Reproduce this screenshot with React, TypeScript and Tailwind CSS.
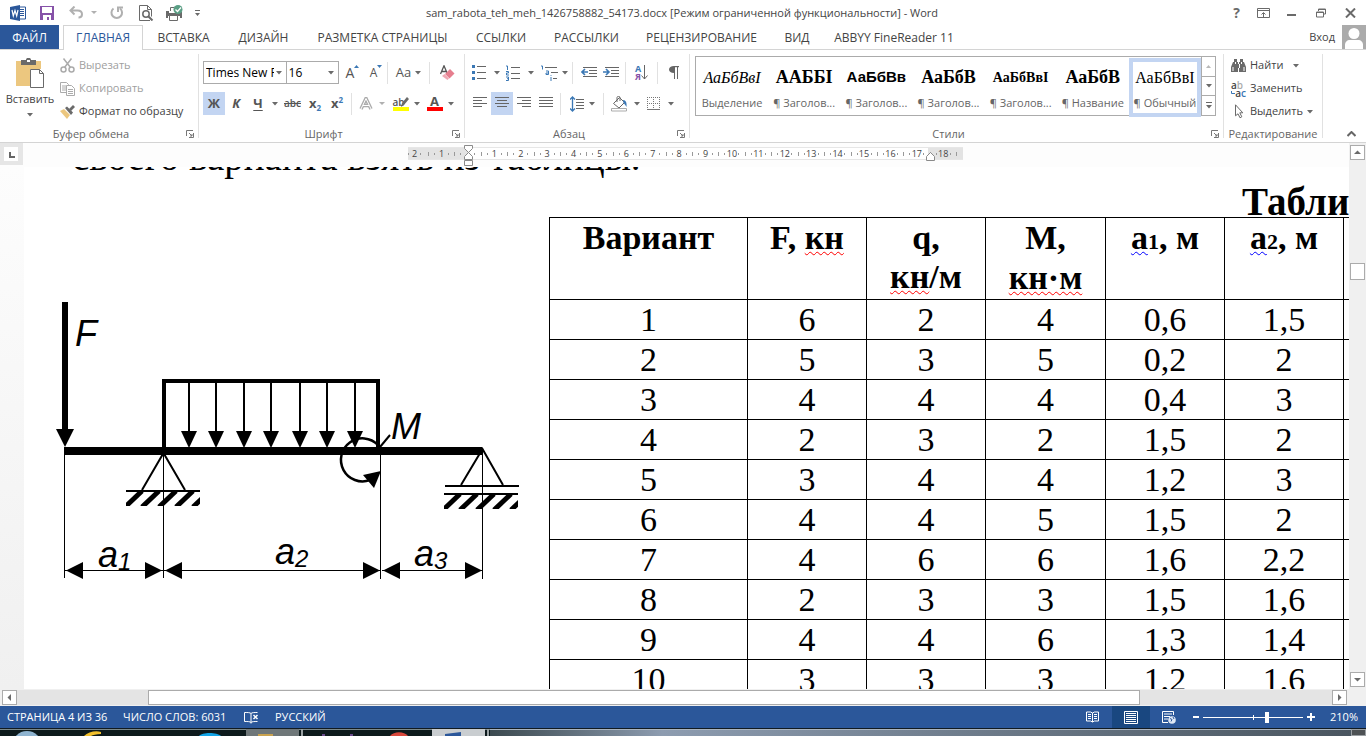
import type { ReactNode } from "react";

const tabs = [
  { name: "ВСТАВКА", width: "w-[81px]" },
  { name: "ДИЗАЙН", width: "w-[79px]" },
  { name: "РАЗМЕТКА СТРАНИЦЫ", width: "w-[159px]" },
  { name: "ССЫЛКИ", width: "w-[78px]" },
  { name: "РАССЫЛКИ", width: "w-[93px]" },
  { name: "РЕЦЕНЗИРОВАНИЕ", width: "w-[137px]" },
  { name: "ВИД", width: "w-[54px]" },
  { name: "ABBYY FineReader 11", width: "w-[140px]" },
];

const serif = "font-['Liberation_Serif','Times_New_Roman',serif]";
const sans = "font-['Liberation_Sans',Arial,sans-serif]";

const styles = [
  { name: "Выделение", sample: "АаБбВвІ", look: `${serif} italic text-[16px]` },
  { name: "¶ Заголов...", sample: "ААББІ", look: `${serif} font-bold text-[18px]` },
  { name: "¶ Заголов...", sample: "АаБбВв", look: `${sans} font-bold text-[15px]` },
  { name: "¶ Заголов...", sample: "АаБбВ", look: `${serif} font-bold text-[18px]` },
  { name: "¶ Заголов...", sample: "АаБбВвІ", look: `${serif} font-bold text-[14px]` },
  { name: "¶ Название", sample: "АаБбВ", look: `${serif} font-bold text-[18px]` },
  { name: "¶ Обычный", sample: "АаБбВвІ", look: `${serif} text-[16px]` },
];

const rows = [
  ["1", "6", "2", "4", "0,6", "1,5"],
  ["2", "5", "3", "5", "0,2", "2"],
  ["3", "4", "4", "4", "0,4", "3"],
  ["4", "2", "3", "2", "1,5", "2"],
  ["5", "3", "4", "4", "1,2", "3"],
  ["6", "4", "4", "5", "1,5", "2"],
  ["7", "4", "6", "6", "1,6", "2,2"],
  ["8", "2", "3", "3", "1,5", "1,6"],
  ["9", "4", "4", "6", "1,3", "1,4"],
  ["10", "3", "3", "3", "1,2", "1,6"],
];

const rulerMarks = ["1", "", "1", "2", "3", "4", "5", "6", "7", "8", "9", "10", "11", "12", "13", "14", "15", "16", "17", "18"];

const loadArrows = [189, 216, 244, 271, 300, 327, 355];

function Caret({ className = "" }: { className?: string }) {
  return (
    <svg className={`shrink-0 ${className}`} width="6" height="4" viewBox="0 0 6 4" aria-hidden>
      <path d="M0 0h6L3 3.5z" fill="#6a6a6a" />
    </svg>
  );
}

function Sep() {
  return <span className="h-[22px] w-px shrink-0 bg-[#e1e1e1]" />;
}

function Tool({ label, className = "w-[22px]", children }: { label: string; className?: string; children: ReactNode }) {
  return (
    <button type="button" aria-label={label} className={`flex h-[23px] shrink-0 items-center justify-center ${className}`}>
      {children}
    </button>
  );
}

function Launcher({ label }: { label: string }) {
  return (
    <button type="button" aria-label={label} className="flex h-4 w-4 items-center justify-center">
      <svg width="8" height="8" viewBox="0 0 8 8" fill="none" stroke="#777" aria-hidden>
        <path d="M.5 6V.5H7M3 3l3 3M7.5 3v4.5H3" />
        <path d="M5 7.5V5h2.5" />
      </svg>
    </button>
  );
}

function Group({ title, className, launcher = true, children }: { title: string; className: string; launcher?: boolean; children: ReactNode }) {
  return (
    <>
      <section className={`flex h-[88px] flex-col ${className}`}>
        <div className="flex-1">{children}</div>
        <div className="flex h-4 items-center">
          <h2 className="flex-1 text-center text-[11px] leading-4 text-[#666]">{title}</h2>
          {launcher && <Launcher label={`${title}: параметры`} />}
        </div>
      </section>
      <span className="h-[84px] w-px bg-[#e1e1e1]" />
    </>
  );
}

function Lines({ rows: list }: { rows: [number, number][] }) {
  return (
    <svg width="14" height="13" viewBox="0 0 14 13" stroke="#666" aria-hidden>
      {list.map(([a, b], i) => (
        <path key={i} d={`M${a} ${i * 3 + 0.5}H${b}`} />
      ))}
    </svg>
  );
}

function TitleBar() {
  return (
    <header className="flex h-[25px] shrink-0 items-center">
      <div className="flex w-[212px] items-center pl-[10px]">
        <svg width="16" height="16" viewBox="0 0 16 16" aria-label="Word">
          <path d="M9 2h6.5v12H9z" fill="#fff" stroke="#2b579a" />
          <path d="M10 4.5h4M10 6.5h4M10 8.5h4M10 10.5h4" stroke="#2b579a" />
          <path d="M0 2l10-2v16L0 14z" fill="#2b579a" />
          <path d="M2 5l1.300 6L5 5.500 6.700 11 8 5" fill="none" stroke="#fff" strokeWidth="1.200" />
        </svg>
        <button type="button" aria-label="Сохранить" className="ml-[14px]">
          <svg width="14" height="14" viewBox="0 0 14 14" aria-hidden>
            <path d="M0 0h14v14H0z" fill="#8652a8" />
            <path d="M2 1h10v6H2zM3 9h8v5H9v-3H7v3H3z" fill="#fff" />
          </svg>
        </button>
        <button type="button" aria-label="Отменить" className="ml-[15px] flex items-center gap-[7px]">
          <svg width="15" height="13" viewBox="0 0 15 13" fill="none" stroke="#b0b0b0" strokeWidth="2" aria-hidden>
            <path d="M5.500 0.500L1.500 4.500l4 4M1.500 4.500h7c3.500 0 4.500 1.500 4.500 3.700 0 2-1.500 3.300-3.500 3.300" />
          </svg>
          <svg width="6" height="4" viewBox="0 0 6 4" aria-hidden><path d="M0 0h6L3 3z" fill="#b0b0b0" /></svg>
        </button>
        <button type="button" aria-label="Повторить" className="ml-[13px]">
          <svg width="14" height="14" viewBox="0 0 14 14" fill="none" stroke="#b0b0b0" strokeWidth="2" aria-hidden>
            <path d="M3.500 2.500A5.300 5.300 0 1 0 10 2.500" />
            <path d="M8 6V1.500h5" />
          </svg>
        </button>
        <button type="button" aria-label="Просмотр" className="ml-[15px]">
          <svg width="15" height="16" viewBox="0 0 15 16" fill="none" stroke="#6a6a6a" aria-hidden>
            <path d="M11 15.500H.5V.5h8l4 4v7M8.500.5v4h4" />
            <circle cx="7" cy="9" r="3.200" strokeWidth="1.500" />
            <path d="M9.500 11.500l4 4" strokeWidth="2" />
          </svg>
        </button>
        <button type="button" aria-label="Быстрая печать" className="ml-[12px]">
          <svg width="17" height="16" viewBox="0 0 17 16" aria-hidden>
            <path d="M0 6h3v2h9V7h4v6h-2v-2H2v2H0z" fill="#6a6a6a" />
            <path d="M4.500 6V2.500H8M3.500 10.500h8v5h-8z" fill="#fff" stroke="#6a6a6a" />
            <circle cx="12" cy="4.500" r="4.500" fill="#5a9e84" />
            <path d="M9.500 4.500l2 2 3.500-4" fill="none" stroke="#fff" strokeWidth="1.300" />
          </svg>
        </button>
        <button type="button" aria-label="Настройка панели" className="ml-[12px]">
          <svg width="5" height="6" viewBox="0 0 5 6" aria-hidden>
            <path d="M0 0h5v1H0zM0 3h5L2.500 6z" fill="#6a6a6a" />
          </svg>
        </button>
      </div>
      <h1 className="flex-1 text-center text-[11px] leading-4 text-[#444]">
        sam_rabota_teh_meh_1426758882_54173.docx [Режим ограниченной функциональности] - Word
      </h1>
      <div className="flex w-[214px] items-center justify-end gap-[17px] pr-[10px] text-[#6a6a6a]">
        <button type="button" aria-label="Справка" className="text-[14px] leading-4 font-bold">?</button>
        <button type="button" aria-label="Параметры ленты">
          <svg width="13" height="10" viewBox="0 0 13 10" fill="none" stroke="#6a6a6a" aria-hidden>
            <path d="M.5.5h12v9H.5zM.5 2.500h12M6.500 9V5M4.500 6.500l2-2 2 2" />
          </svg>
        </button>
        <button type="button" aria-label="Свернуть">
          <svg width="9" height="10" viewBox="0 0 9 10" aria-hidden><path d="M0 6h9v2H0z" fill="#6a6a6a" /></svg>
        </button>
        <button type="button" aria-label="Восстановить" className="ml-[3px]">
          <svg width="10" height="10" viewBox="0 0 10 10" fill="none" stroke="#6a6a6a" aria-hidden>
            <path d="M2.500 3V1h7v5H8M.5 4h7v5h-7zM2 1.500h8M0 4.500h8" />
          </svg>
        </button>
        <button type="button" aria-label="Закрыть" className="ml-[2px]">
          <svg width="11" height="10" viewBox="0 0 11 10" stroke="#6a6a6a" strokeWidth="2" aria-hidden>
            <path d="M1 .5l9 9M10 .5l-9 9" />
          </svg>
        </button>
      </div>
    </header>
  );
}

function TabBar() {
  return (
    <nav className="flex h-[25px] shrink-0 border-b border-[#d4d4d4] text-[12px] text-[#444]">
      <button type="button" className="w-[59px] bg-[#2b579a] pt-px text-white">ФАЙЛ</button>
      <button type="button" className="-mb-px ml-1 w-[80px] border border-b-0 border-[#d4d4d4] bg-white text-[#2b579a]">
        ГЛАВНАЯ
      </button>
      {tabs.map((tab) => (
        <button key={tab.name} type="button" className={`pt-[2px] whitespace-nowrap ${tab.width}`}>
          {tab.name}
        </button>
      ))}
      <a href="#login" className="ml-auto mr-[7px] text-[11px] leading-6">Вход</a>
      <svg className="h-6 w-6" viewBox="0 0 24 24" aria-hidden>
        <path d="M0 0h24v24H0z" fill="#ababab" />
        <circle cx="12" cy="8.500" r="5.500" fill="#fff" />
        <path d="M3 24v-4c0-3 2-5 5-5h8c3 0 5 2 5 5v4z" fill="#fff" />
      </svg>
    </nav>
  );
}

function Clipboard() {
  return (
    <Group title="Буфер обмена" className="w-[198px]">
      <div className="flex">
        <button type="button" className="flex w-[60px] flex-col items-center pt-1 text-[11px] text-[#444]">
          <svg width="30" height="31" viewBox="0 0 30 31" aria-hidden>
            <path d="M1 3h25v8H15v17H1z" fill="#ecc77f" />
            <path d="M6 2h5c0-3 5-3 5 0h5v5H6z" fill="#6a6a6a" />
            <path d="M12 2h3v2h-3z" fill="#fff" />
            <path d="M15.500 11.500h9l4 4v14h-13z" fill="#fff" stroke="#6a6a6a" />
            <path d="M24.500 11.500v4h4" fill="none" stroke="#6a6a6a" />
          </svg>
          <span className="mt-[2px] leading-4">Вставить</span>
          <Caret className="mt-[6px]" />
        </button>
        <div className="flex flex-col text-[11px] text-[#a0a0a0]">
          <button type="button" className="flex h-[23px] items-center gap-1">
            <svg width="15" height="15" viewBox="0 0 15 15" fill="none" stroke="#ababab" strokeWidth="1.500" aria-hidden>
              <path d="M3.500.5l7 9M11.500.5l-7 9" />
              <circle cx="3.500" cy="11.500" r="2.500" />
              <circle cx="11.500" cy="11.500" r="2.500" />
            </svg>
            Вырезать
          </button>
          <button type="button" className="flex h-[23px] items-center gap-1">
            <svg width="15" height="14" viewBox="0 0 15 14" fill="#fff" stroke="#ababab" aria-hidden>
              <path d="M.5.5h6l2 2v8h-8zM2 4h4M2 6h4M2 8h4" />
              <path d="M6.500 3.500h5l3 3v7h-8zM8 7.500h5M8 9.500h5M8 11.500h5" />
            </svg>
            Копировать
          </button>
          <button type="button" className="flex h-[23px] items-center gap-1 text-[#444]">
            <svg width="15" height="14" viewBox="0 0 15 14" aria-hidden>
              <path d="M0 6l4-2 6 6-3 4z" fill="#ecc77f" />
              <path d="M5 3l2-1.500 6 6L11 10z" fill="#6a6a6a" />
              <path d="M9 4l4-4 2 2-4 4z" fill="#6a6a6a" />
            </svg>
            Формат по образцу
          </button>
        </div>
      </div>
    </Group>
  );
}

function FontGroup() {
  return (
    <Group title="Шрифт" className="w-[265px]">
      <div className="flex flex-col gap-2 pl-1 pt-[7px] text-[#555]">
        <div className="flex items-center">
          <label className="relative flex h-[23px] w-[86px] items-center border border-[#ababab]">
            <span className="sr-only">Шрифт</span>
            <select className="w-[70px] appearance-none overflow-hidden pl-[2px] text-[12px] text-black">
              <option>Times New R</option>
            </select>
            <Caret className="pointer-events-none absolute right-1" />
          </label>
          <label className="relative -ml-px flex h-[23px] w-[55px] items-center border border-[#ababab]">
            <span className="sr-only">Размер шрифта</span>
            <select className="w-10 appearance-none pl-[2px] text-[12px] text-black">
              <option>16</option>
            </select>
            <Caret className="pointer-events-none absolute right-1" />
          </label>
          <Tool label="Увеличить размер" className="ml-[5px] w-[17px]">
            <span className="text-[14px]">A</span>
            <svg className="mb-3" width="5" height="3" viewBox="0 0 5 3" aria-hidden><path d="M0 3h5L2.500 0z" fill="#3b78b5" /></svg>
          </Tool>
          <Tool label="Уменьшить размер" className="ml-[5px] w-5">
            <span className="text-[12px]">A</span>
            <svg className="mb-3" width="5" height="3" viewBox="0 0 5 3" aria-hidden><path d="M0 0h5L2.500 3z" fill="#3b78b5" /></svg>
          </Tool>
          <span className="w-px" />
          <Sep />
          <Tool label="Регистр" className="w-[41px] gap-1">
            <span className="text-[13px]">Aa</span>
            <Caret />
          </Tool>
          <Sep />
          <Tool label="Очистить формат" className="w-[34px]">
            <svg width="15" height="15" viewBox="0 0 15 15" aria-hidden>
              <path d="M.5 9L4 .8 7.500 9M2 6.500h4" fill="none" stroke="#555" strokeWidth="1.300" />
              <path d="M5 9l5-5 4.500 4.500-5 5z" fill="#e67e8e" />
              <path d="M2 11l2.500-2 4.500 4.500L7.500 15z" fill="#f0a8b3" />
            </svg>
          </Tool>
        </div>
        <div className="flex items-center">
          <Tool label="Полужирный" className="w-[22px] bg-[#c3d5f2]"><b className="text-[13px]">Ж</b></Tool>
          <Tool label="Курсив"><b className="text-[13px] italic">К</b></Tool>
          <Tool label="Подчеркнутый"><b className="text-[13px] underline underline-offset-2">Ч</b></Tool>
          <Tool label="Вид подчеркивания" className="w-3"><Caret /></Tool>
          <Tool label="Зачеркнутый" className="w-[23px]"><span className="text-[10px] font-semibold line-through">abc</span></Tool>
          <Tool label="Подстрочный"><b className="text-[13px]">x</b><span className="mt-2 text-[8px] font-bold text-[#3b78b5]">2</span></Tool>
          <Tool label="Надстрочный"><b className="text-[13px]">x</b><span className="mb-2 text-[8px] font-bold text-[#3b78b5]">2</span></Tool>
          <span className="w-[3px]" />
          <Sep />
          <Tool label="Текстовые эффекты" className="w-10 gap-[6px]">
            <svg width="14" height="14" viewBox="0 0 14 14" fill="none" aria-hidden>
              <path d="M2 12L7 1.500 12 12M4 8.500h6" stroke="#ababab" strokeWidth="3.500" />
              <path d="M2 12L7 1.500 12 12M4 8.500h6" stroke="#fff" />
            </svg>
            <svg width="6" height="4" viewBox="0 0 6 4" aria-hidden><path d="M0 0h6L3 3z" fill="#b0b0b0" /></svg>
          </Tool>
          <Tool label="Цвет выделения" className="w-7 gap-[5px]">
            <span className="flex w-4 flex-col">
              <span className="flex h-[11px] items-center text-[10px] leading-none font-semibold">
                ab
                <svg className="-ml-1" width="8" height="10" viewBox="0 0 8 10" aria-hidden><path d="M0 10l1-4 5-6 2 2-5 6z" fill="#6a6a6a" /></svg>
              </span>
              <span className="h-1 bg-[#ff0]" />
            </span>
            <Caret />
          </Tool>
          <Tool label="Цвет текста" className="w-10 gap-[5px]">
            <span className="flex w-4 flex-col text-center">
              <b className="h-[11px] text-[13px] leading-[11px]">A</b>
              <span className="h-1 bg-[#f00]" />
            </span>
            <Caret />
          </Tool>
        </div>
      </div>
    </Group>
  );
}

function ParagraphGroup() {
  return (
    <Group title="Абзац" className="w-[224px]">
      <div className="flex flex-col gap-2 pl-1 pt-[7px]">
        <div className="flex items-center">
          <Tool label="Маркеры" className="w-[34px] gap-2">
            <svg width="14" height="15" viewBox="0 0 14 15" aria-hidden>
              <path d="M0 0h3v3H0zM0 6h3v3H0zM0 12h3v3H0z" fill="#3b78b5" />
              <path d="M5 1.500h9M5 7.500h9M5 13.500h9" stroke="#666" />
            </svg>
            <Caret />
          </Tool>
          <Tool label="Нумерация" className="w-[34px] gap-2">
            <svg width="14" height="16" viewBox="0 0 14 16" aria-hidden>
              <path d="M0 1h1.500v4M0 6.500h2.500v1.500h-2v2H3M0 12h2.500v3.500H0M1 13.700h1.500" fill="none" stroke="#3b78b5" />
              <path d="M5 2.500h9M5 8.500h9M5 13.500h9" stroke="#666" />
            </svg>
            <Caret />
          </Tool>
          <Tool label="Многоуровневый список" className="w-[34px] gap-1">
            <svg width="17" height="16" viewBox="0 0 17 16" aria-hidden>
              <path d="M0 1h1.500v3.500M5 6h2.500v3.500H5V8h2M10 10v.8M10 12v4" fill="none" stroke="#3b78b5" />
              <path d="M4 2.500h12M10 7.500h7M12 13.500h4" stroke="#666" />
            </svg>
            <Caret />
          </Tool>
          <span className="w-[3px]" />
          <Sep />
          <Tool label="Уменьшить отступ" className="w-[28px] pl-1">
            <svg width="16" height="11" viewBox="0 0 16 11" aria-hidden>
              <path d="M2 .5h14M8 3.500h8M8 6.500h8M2 9.500h14" stroke="#666" />
              <path d="M7 5H1M4 2L1 5l3 3" fill="none" stroke="#3b78b5" strokeWidth="1.600" />
            </svg>
          </Tool>
          <Tool label="Увеличить отступ" className="w-[24px] pr-1">
            <svg width="16" height="11" viewBox="0 0 16 11" aria-hidden>
              <path d="M2 .5h14M8 3.500h8M8 6.500h8M2 9.500h14" stroke="#666" />
              <path d="M0 5h6M3 2l3 3-3 3" fill="none" stroke="#3b78b5" strokeWidth="1.600" />
            </svg>
          </Tool>
          <Sep />
          <Tool label="Сортировка" className="w-[31px]">
            <span className="flex flex-col text-[9px] leading-[8px] font-bold">
              <span className="text-[#3b78b5]">А</span>
              <span className="text-[#8652a8]">Я</span>
            </span>
            <svg width="7" height="15" viewBox="0 0 7 15" fill="none" stroke="#666" aria-hidden><path d="M3.500 0v14M.5 10.500l3 3.500 3-3.500" /></svg>
          </Tool>
          <Sep />
          <Tool label="Знаки абзаца" className="w-[31px]">
            <svg width="10" height="13" viewBox="0 0 10 13" aria-hidden>
              <path d="M4.500 0H10v1.200H4.500z" fill="#666" />
              <path d="M5 0v7C2 7 0 5.800 0 3.500S2 0 5 0z" fill="#666" />
              <path d="M5.500 0v13M8.500 0v13" stroke="#666" />
            </svg>
          </Tool>
        </div>
        <div className="flex items-center">
          <Tool label="По левому краю"><Lines rows={[[0, 14], [0, 9], [0, 14], [0, 9]]} /></Tool>
          <Tool label="По центру" className="w-[22px] bg-[#c3d5f2]"><Lines rows={[[0, 14], [2, 12], [0, 14], [2, 12]]} /></Tool>
          <Tool label="По правому краю"><Lines rows={[[0, 14], [5, 14], [0, 14], [5, 14]]} /></Tool>
          <Tool label="По ширине"><Lines rows={[[0, 14], [0, 14], [0, 14], [0, 14]]} /></Tool>
          <span className="w-[3px]" />
          <Sep />
          <Tool label="Интервал" className="w-[42px] gap-[5px]">
            <svg width="14" height="16" viewBox="0 0 14 16" aria-hidden>
              <path d="M2.500 1v14M0 3.500L2.500 1 5 3.500M0 12.500L2.500 15 5 12.500" fill="none" stroke="#3b78b5" strokeWidth="1.300" />
              <path d="M6 3.500h8M6 6.500h8M6 9.500h8M6 12.500h8" stroke="#666" />
            </svg>
            <Caret />
          </Tool>
          <Sep />
          <Tool label="Заливка" className="w-[38px] gap-[6px] pl-1">
            <svg width="17" height="16" viewBox="0 0 17 16" fill="none" aria-hidden>
              <path d="M2.500 7.500l6-6 5 5-5.500 5.500zM6 6V1.500c0-1.500 3-1.500 3 0V5" stroke="#666" />
              <path d="M12 4c3 0 4 3 3.500 7-1-2-2-3-3-4z" fill="#3b78b5" />
              <path d="M.5 12.500h15v2.500H.5z" fill="#fff" stroke="#ababab" />
            </svg>
            <Caret />
          </Tool>
          <Tool label="Границы" className="w-9 gap-2">
            <svg width="13" height="13" viewBox="0 0 13 13" fill="none" stroke="#777" aria-hidden>
              <path d="M.5 0v12M6.500 0v12M12.500 0v12M0 .5h13M0 6.500h13" strokeDasharray="1 1" />
              <path d="M0 12.500h13" />
            </svg>
            <Caret />
          </Tool>
        </div>
      </div>
    </Group>
  );
}

function StylesGroup() {
  return (
    <Group title="Стили" className="min-w-0 flex-1">
      <div className="pl-[5px] pr-[7px] pt-[2px]">
        <div className="flex h-[60px] w-full border border-[#ababab]">
          <div className="grid min-w-0 flex-1 grid-cols-7 py-px">
            {styles.map((style, index) => (
              <button
                key={index}
                type="button"
                className={
                  index === 6
                    ? "flex min-w-0 flex-col items-center border-4 border-[#c3d5f2]"
                    : "flex min-w-0 flex-col items-center border-4 border-transparent"
                }
              >
                <span className={`flex h-[31px] w-[58px] items-center justify-center whitespace-nowrap text-black ${style.look}`}>
                  {style.sample}
                </span>
                <span className="text-[11px] leading-5 whitespace-nowrap text-[#666]">{style.name}</span>
              </button>
            ))}
          </div>
          <div className="flex w-[14px] flex-col divide-y divide-[#ababab] border-l border-[#ababab]">
            <button type="button" aria-label="Вверх" className="flex flex-1 items-center justify-center">
              <svg width="5" height="3" viewBox="0 0 5 3" aria-hidden><path d="M0 3h5L2.500 0z" fill="#b8b8b8" /></svg>
            </button>
            <button type="button" aria-label="Вниз" className="flex flex-1 items-center justify-center"><Caret /></button>
            <button type="button" aria-label="Все стили" className="flex flex-1 flex-col items-center justify-center gap-[2px]">
              <span className="h-px w-[6px] bg-[#666]" />
              <Caret />
            </button>
          </div>
        </div>
      </div>
    </Group>
  );
}

function EditingGroup() {
  return (
    <Group title="Редактирование" className="w-[98px]" launcher={false}>
      <div className="flex flex-col pl-[7px] text-[11px] text-[#444]">
        <button type="button" className="flex h-[23px] items-center gap-1">
          <svg width="15" height="14" viewBox="0 0 15 14" fill="#6a6a6a" aria-hidden>
            <path d="M2 3h1V0h3v3h1v10H0V8zM13 3h-1V0H9v3H8v10h7V8zM6 5h3v4H6z" />
            <path d="M2 8v4M13 8v4M4.500 3v2M10.500 3v2" stroke="#fff" />
          </svg>
          Найти
          <Caret className="ml-[6px]" />
        </button>
        <button type="button" className="flex h-[23px] items-center gap-1">
          <span className="w-[15px] text-left text-[10px] leading-[8px] font-semibold">
            <span className="block">a<span className="text-[#ababab]">b</span></span>
            <span className="flex items-center justify-end">
              <svg width="4" height="4" viewBox="0 0 4 4" fill="none" stroke="#3b78b5" aria-hidden><path d="M.5 0v2.500H4" /></svg>
              a<span className="text-[#3b78b5]">c</span>
            </span>
          </span>
          Заменить
        </button>
        <button type="button" className="flex h-[23px] items-center gap-1">
          <svg width="15" height="15" viewBox="0 0 15 15" aria-hidden>
            <path d="M4.500.8v11l2.500-2 2 4 1.800-1-2-4h3z" fill="#fff" stroke="#6a6a6a" />
          </svg>
          Выделить
          <Caret />
        </button>
      </div>
    </Group>
  );
}

function Ruler() {
  return (
    <div className="flex h-6 shrink-0 items-start bg-[#fdfdfd]">
      <button type="button" aria-label="Табуляция" className="h-[22px] w-[23px] bg-[#e6e6e6] p-1">
        <svg className="bg-white" width="14" height="14" viewBox="0 0 14 14" aria-hidden>
          <path d="M5 5h2v4h4v2H5z" fill="#666" />
        </svg>
      </button>
      <div className="relative ml-[385px] mt-1 flex h-[13px] w-[555px] border-y border-[#e6e6e6] bg-[linear-gradient(to_right,#e3e3e3_60px,#fff_60px,#fff_520px,#e3e3e3_520px)] text-[9px] leading-[11px] text-[#444]">
        <span className="flex w-5 items-center gap-[3px]">
          <i className="h-[2px] w-px bg-[#999]" />2<i className="h-[2px] w-px bg-[#999]" />
        </span>
        {rulerMarks.map((mark, i) => (
          <span key={i} className="flex min-w-0 flex-1 items-center">
            <i className="h-1 w-px bg-[#999]" />
            <i className="ml-[5px] h-[2px] w-px bg-[#999]" />
            <span className="flex w-[13px] justify-center">{mark}</span>
            <i className="h-[2px] w-px bg-[#999]" />
          </span>
        ))}
        <span className="flex w-[7px] items-center"><i className="h-1 w-px bg-[#999]" /></span>
        <svg className="absolute -top-[3px] left-[56px]" width="10" height="23" viewBox="0 0 10 23" fill="#fff" stroke="#8a8a8a" aria-hidden>
          <path d="M.5.5h8v3l-4 4-4-4zM.5 14.500v-3l4-4 4 4v3zM.5 15.500h8v5h-8z" />
        </svg>
        <svg className="absolute left-[518px] top-1" width="10" height="9" viewBox="0 0 10 9" fill="#fff" stroke="#8a8a8a" aria-hidden>
          <path d="M.5 8.500v-4l4-4 4 4v4z" />
        </svg>
      </div>
    </div>
  );
}

function Hatch({ x, y }: { x: number; y: number }) {
  return (
    <svg x={x} y={y} width="74" height="14" viewBox="0 0 74 14">
      {[0, 17, 34, 51, 68].map((dx) => (
        <path key={dx} d={`M${dx - 1} 15L${dx + 16} -1`} stroke="#000" strokeWidth="5" />
      ))}
    </svg>
  );
}

function Dimension({ from, to }: { from: number; to: number }) {
  return (
    <g>
      <path d={`M${from} 570.5H${to}`} stroke="#000" />
      <path d={`M${from + 1} 570.5l17-8.5v17zM${to - 1} 570.5l-17-8.5v17z`} />
    </g>
  );
}

function BeamFigure() {
  return (
    <svg className="h-[472px] w-[525px] shrink-0 font-['Liberation_Sans_Narrow','Liberation_Sans',Arial,sans-serif] italic" viewBox="24 217 525 472" role="img" aria-label="Схема балки">
      <path d="M62 302h6v127h-6zM56 429h18l-9 18z" />
      <path d="M64 447h418v8H64z" />
      <path d="M164 449V381H378V447" fill="none" stroke="#000" strokeWidth="4" />
      {loadArrows.map((x) => (
        <g key={x}>
          <path d={`M${x} 382V433`} stroke="#000" strokeWidth="2" />
          <path d={`M${x - 8} 431h16l-8 17z`} />
        </g>
      ))}
      <g fill="none" stroke="#000" strokeWidth="2">
        <path d="M142 490l21.500-37L185 490" />
        <path d="M126 491h74" />
        <path d="M461 485l21.500-36L503 485" />
        <path d="M445 486h74M444 494h74" />
        <path d="M380 447l10-12" />
      </g>
      <Hatch x={126} y={492} />
      <Hatch x={444} y={495} />
      <path d="M378 445A21.500 21.500 0 1 0 370 480" fill="none" stroke="#000" strokeWidth="2.500" />
      <path d="M363 475l18-4-7 17z" />
      <path d="M64.500 455V578M163.500 455V578M380.500 455V579M482.500 449V579" stroke="#000" />
      <Dimension from={65} to={163} />
      <Dimension from={164} to={381} />
      <Dimension from={382} to={483} />
      <g fontSize="36">
        <text x="75" y="346">F</text>
        <text x="391" y="439">M</text>
        <text x="98" y="567">a<tspan fontSize="24" dy="3">1</tspan></text>
        <text x="275" y="564">a<tspan fontSize="24" dy="3">2</tspan></text>
        <text x="414" y="566">a<tspan fontSize="24" dy="3">3</tspan></text>
      </g>
    </svg>
  );
}

function Misspelt({ children, grammar = false }: { children: ReactNode; grammar?: boolean }) {
  return (
    <span
      className={
        grammar
          ? "underline decoration-[#00f] decoration-wavy decoration-1 underline-offset-2"
          : "underline decoration-[#f00] decoration-wavy decoration-1 underline-offset-2"
      }
    >
      {children}
    </span>
  );
}

function VariantTable() {
  return (
    <table className="w-[814px] shrink-0 table-fixed border-collapse self-start text-center text-[34px] leading-[39px] [&_td]:border [&_td]:border-black [&_td]:p-0 [&_th]:border [&_th]:border-black [&_th]:p-0 [&_th]:align-top">
      <colgroup>
        <col className="w-[198px]" />
        <col className="w-[119px]" />
        <col className="w-[119px]" />
        <col className="w-[120px]" />
        <col className="w-[119px]" />
        <col className="w-[119px]" />
        <col />
      </colgroup>
      <thead>
        <tr className="h-[82px]">
          <th>Вариант</th>
          <th>F, <Misspelt>кн</Misspelt></th>
          <th>q,<br /><Misspelt>кн</Misspelt>/м</th>
          <th>
            М,
            <span className="block leading-[42px]"><Misspelt>кн·м</Misspelt></span>
          </th>
          <th><Misspelt grammar>а</Misspelt><span className="text-[22px]">1</span>, м</th>
          <th><Misspelt grammar>а</Misspelt><span className="text-[22px]">2</span>, м</th>
          <th />
        </tr>
      </thead>
      <tbody>
        {rows.map((row) => (
          <tr key={row[0]} className="h-10">
            {row.map((cell, i) => (
              <td key={i}>{cell}</td>
            ))}
            <td />
          </tr>
        ))}
      </tbody>
    </table>
  );
}

function ScrollArrow({ label, d }: { label: string; d: string }) {
  return (
    <button type="button" aria-label={label} className="flex h-[15px] w-[15px] shrink-0 items-center justify-center border border-[#ababab] bg-white">
      <svg width="7" height="7" viewBox="0 0 7 7" aria-hidden><path d={d} fill="#6a6a6a" /></svg>
    </button>
  );
}

function DocumentArea() {
  return (
    <main className="flex min-h-0 flex-1 bg-[#f0f0f0]">
      <div className="flex min-w-0 flex-1 flex-col">
        <Ruler />
        <div className="flex min-h-0 flex-1">
          <div className="w-6 shrink-0 bg-linear-to-b from-[#fdfdfd] to-[#f0f0f0]" />
          <article className={`min-w-0 flex-1 overflow-hidden bg-white text-black ${serif}`}>
            <div className="flex h-[50px] flex-col justify-end text-[39px] whitespace-nowrap">
              <p className="pl-12 leading-[59px]">своего варианта взять из таблицы.</p>
              <p className="pl-[1218px] leading-[31px] font-bold">Табли</p>
            </div>
            <div className="flex">
              <BeamFigure />
              <VariantTable />
            </div>
          </article>
        </div>
      </div>
      <div className="flex w-[17px] flex-col items-center pb-[2px] pt-[2px]">
        <ScrollArrow label="Прокрутить вверх" d="M0 5h7L3.500 1.500z" />
        <div className="flex w-[15px] flex-1 flex-col bg-[#f0f0f0] pt-[103px]">
          <div className="h-[17px] border border-[#ababab] bg-white" />
        </div>
        <ScrollArrow label="Прокрутить вниз" d="M0 2h7L3.500 5.500z" />
      </div>
    </main>
  );
}

function HorizontalScroll() {
  return (
    <div className="flex h-[17px] shrink-0 items-center bg-[#f0f0f0] pl-[2px] pr-[19px]">
      <ScrollArrow label="Прокрутить влево" d="M5 0v7L1.500 3.500z" />
      <div className="flex h-[15px] flex-1 bg-[#e4e4e4] pl-[131px] pr-[192px]">
        <div className="flex-1 border border-[#ababab] bg-white" />
      </div>
      <ScrollArrow label="Прокрутить вправо" d="M2 0v7L5.500 3.500z" />
    </div>
  );
}

function StatusBar() {
  return (
    <footer className="flex h-[22px] shrink-0 items-center bg-[#2b579a] text-[11px] text-white">
      <span className="w-[116px] pl-[7px] whitespace-nowrap">СТРАНИЦА 4 ИЗ 36</span>
      <span className="w-[128px] pl-[7px] whitespace-nowrap">ЧИСЛО СЛОВ: 6031</span>
      <svg width="15" height="13" viewBox="0 0 15 13" fill="none" stroke="#fff" aria-hidden>
        <path d="M7 11.500c-1-1-3-1-6.500-1V1.500C4 1.500 6 1.500 7 2.500zv1M7 2.500c1-1 3-1 6.500-1M7 11.500c1-1 3-1 6.500-1" />
        <path d="M9.500 4l4 4M13.500 4l-4 4" strokeWidth="1.500" />
      </svg>
      <span className="ml-[16px]">РУССКИЙ</span>
      <div className="ml-auto flex h-full items-center">
        <button type="button" aria-label="Режим чтения" className="flex w-[39px] justify-center">
          <svg width="13" height="12" viewBox="0 0 13 12" fill="none" stroke="#fff" aria-hidden>
            <path d="M.5 1h4l2 1 2-1h4v9h-4l-2 1-2-1h-4zM6.500 2v9M2 3.500h3M2 5.500h3M2 7.500h3M8 3.500h3M8 5.500h3M8 7.500h3" />
          </svg>
        </button>
        <button type="button" aria-label="Разметка страницы" className="flex h-full w-[38px] items-center justify-center bg-[#194780]">
          <svg width="14" height="13" viewBox="0 0 14 13" fill="none" stroke="#fff" aria-hidden>
            <path d="M.5.5h13v12H.5zM2 2.500h10M2 4.500h10M2 6.500h10M2 8.500h10M2 10.500h10" />
          </svg>
        </button>
        <button type="button" aria-label="Веб-документ" className="flex w-[38px] justify-center">
          <svg width="14" height="13" viewBox="0 0 14 13" fill="none" stroke="#fff" aria-hidden>
            <path d="M6 11.500H.5V.5h11V4M2 3h8M2 5.500h6M2 8h4" />
            <circle cx="10" cy="9" r="3.800" fill="#dfe8f5" stroke="none" />
            <path d="M8 7.500l2 1-1 2M11 6l1 2" stroke="#2b579a" />
          </svg>
        </button>
        <button type="button" aria-label="Уменьшить" className="flex w-[15px] justify-center">
          <span className="h-[2px] w-[6px] bg-white" />
        </button>
        <input
          type="range"
          aria-label="Масштаб"
          defaultValue={65}
          className="h-[11px] w-[100px] appearance-none bg-[linear-gradient(#fff,#fff),linear-gradient(#fff,#fff)] bg-[length:100%_1px,1px_5px] bg-center bg-no-repeat [&::-webkit-slider-thumb]:h-[11px] [&::-webkit-slider-thumb]:w-1 [&::-webkit-slider-thumb]:appearance-none [&::-webkit-slider-thumb]:bg-white"
        />
        <button type="button" aria-label="Увеличить" className="flex w-[16px] justify-center">
          <svg width="8" height="8" viewBox="0 0 8 8" aria-hidden><path d="M3 0h2v3h3v2H5v3H3V5H0V3h3z" fill="#fff" /></svg>
        </button>
        <span className="w-[47px] pr-2 text-right">210%</span>
      </div>
    </footer>
  );
}

function Taskbar() {
  return (
    <div className="flex h-2 shrink-0 overflow-hidden border-t border-[#111a20] bg-[#0d1a1c]">
      <svg className="h-[7px] w-[490px] shrink-0" viewBox="0 0 490 7" aria-hidden>
        <path d="M0 .5H490" stroke="#7c8a8c" />
        <circle cx="27" cy="17" r="15" fill="#8fb4d0" />
        <path d="M84 7c4-4 12-6 17-4v2c-5 0-8 1-10 2z" fill="#f2c02c" />
        <path d="M199 7c3-4 18-4 22 0z" fill="#12a5e8" />
        <path d="M246 0h53v7h-53z" fill="#6f7779" />
        <path d="M258 5h15v2h-15z" fill="#c9a24e" />
        <path d="M301 0h2v7h-2z" fill="#9aa2a4" />
        <path d="M322 5h3v2h-3zM350 5h3v2h-3z" fill="#6a4a8c" />
        <path d="M390 7c4-5 14-5 18 0z" fill="#d8483c" />
        <path d="M432 0h53v7h-53z" fill="#c9cdd0" />
        <path d="M445 5l16-2v4h-16z" fill="#2b579a" />
        <path d="M487 0h2v7h-2z" fill="#9aa2a4" />
      </svg>
      <div className="flex-1 border-t border-[#a9b4c0] bg-linear-to-r from-[#3c4a50] via-[#8d9cb0] via-20% to-[#4a5660]" />
      <div className="w-[15px] border border-[#9a9fa3] bg-[#4d5154]" />
    </div>
  );
}

export default function App() {
  return (
    <div className="flex h-screen w-full flex-col overflow-hidden bg-white font-['Open_Sans','Noto_Sans',sans-serif]">
      <TitleBar />
      <TabBar />
      <div className="flex h-[93px] shrink-0 border-b border-[#d4d4d4] pt-1">
        <Clipboard />
        <FontGroup />
        <ParagraphGroup />
        <StylesGroup />
        <EditingGroup />
        <div className="flex w-[43px] items-end justify-end pb-[2px] pr-[10px]">
          <button type="button" aria-label="Свернуть ленту" className="pb-[3px]">
            <svg width="9" height="6" viewBox="0 0 9 6" fill="none" stroke="#666" strokeWidth="2" aria-hidden><path d="M.5 5l4-4 4 4" /></svg>
          </button>
        </div>
      </div>
      <DocumentArea />
      <HorizontalScroll />
      <StatusBar />
      <Taskbar />
    </div>
  );
}
